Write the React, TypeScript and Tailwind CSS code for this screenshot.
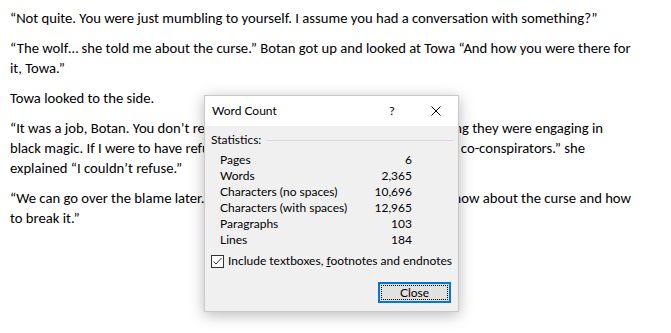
import React from "react";

function Line({ w, left, right }: { w: string; left: string; right: string }) {
  return (
    <div className={`flex ${w}`}>
      <span className="flex-1 min-w-0 overflow-hidden whitespace-nowrap">{left}</span>
      <span className="shrink-0 whitespace-pre">{right}</span>
    </div>
  );
}

const stats: [string, string][] = [
  ["Pages", "6"],
  ["Words", "2,365"],
  ["Characters (no spaces)", "10,696"],
  ["Characters (with spaces)", "12,965"],
  ["Paragraphs", "103"],
  ["Lines", "184"],
];

export default function App() {
  return (
    <div className="relative w-[671px] h-[333px] overflow-hidden bg-white">
      <div className="pl-[10px] pt-2 font-['Carlito','Calibri',sans-serif] text-[14.67px] leading-[20px] text-black">
        <p className="mb-[10px] whitespace-nowrap">
          “Not quite. You were just mumbling to yourself. I assume you had a conversation with something?”
        </p>
        <p className="mb-[10px] whitespace-nowrap">
          “The wolf… she told me about the curse.” Botan got up and looked at Towa “And how you were there for
          <br />
          it, Towa.”
        </p>
        <p className="mb-[10px]">Towa looked to the side.</p>
        <div className="mb-[10px]">
          <Line
            w="w-[593px]"
            left="“It was a job, Botan. You don’t realize how much trouble I was in, not "
            right="knowing they were engaging in"
          />
          <Line
            w="w-[575px]"
            left="black magic. If I were to have refused, they would have made me one of "
            right="their co-conspirators.” she"
          />
          <div>explained “I couldn’t refuse.”</div>
        </div>
        <div>
          <Line
            w="w-[621px]"
            left="“We can go over the blame later. Right now, I just need everything "
            right="you know about the curse and how"
          />
          <div>to break it.”</div>
        </div>
      </div>

      <div className="absolute left-[204px] top-[95px] w-[255px] border border-[#c8c8c8] bg-[#f0f0f0] font-['Lato',sans-serif] text-[12px] text-black shadow-[0_3px_14px_rgba(0,0,0,0.28)]">
        <div className="flex h-[30px] items-center bg-white pl-[7px]">
          <span className="flex-1">Word Count</span>
          <span className="w-[6px] text-center">?</span>
          <span className="ml-[36px] mr-[17px] flex h-[10px] w-[10px] items-center justify-center">
            <svg width="10" height="10" viewBox="0 0 10 10">
              <path d="M0.5 0.5 L9.5 9.5 M9.5 0.5 L0.5 9.5" stroke="#000" strokeWidth="1" fill="none" />
            </svg>
          </span>
        </div>
        <div className="pl-[6px] pr-[6px] pt-[6px] pb-[8px]">
          <div className="flex h-[16px] items-center">
            <span className="leading-[16px]">Statistics:</span>
            <span className="ml-[6px] mr-[-1px] h-px flex-1 bg-[#dadada]" />
          </div>
          <div className="ml-[9px] mt-[4px] w-[192px]">
            {stats.map(([k, v]) => (
              <div key={k} className="flex h-[16px] items-center justify-between leading-[16px]">
                <span>{k}</span>
                <span>{v}</span>
              </div>
            ))}
          </div>
          <div className="mt-[5px] flex h-[16px] items-center">
            <span className="flex h-[13px] w-[13px] items-center justify-center border border-[#333] bg-white">
              <svg width="11" height="11" viewBox="0 0 11 11">
                <path d="M1.5 5.5 L4 8 L9.5 2" stroke="#333" strokeWidth="1" fill="none" />
              </svg>
            </span>
            <span className="ml-[4px] leading-[16px]">
              Include textboxes, <span className="underline">f</span>ootnotes and endnotes
            </span>
          </div>
          <div className="mt-[13px] flex justify-end pr-[1px]">
            <button className="flex h-[21px] w-[73px] items-center justify-center border-2 border-[#0078d7] bg-[#e1e1e1] p-px">
              <span className="flex h-full w-full items-center justify-center border border-dotted border-black leading-none">
                Close
              </span>
            </button>
          </div>
        </div>
      </div>
    </div>
  );
}
